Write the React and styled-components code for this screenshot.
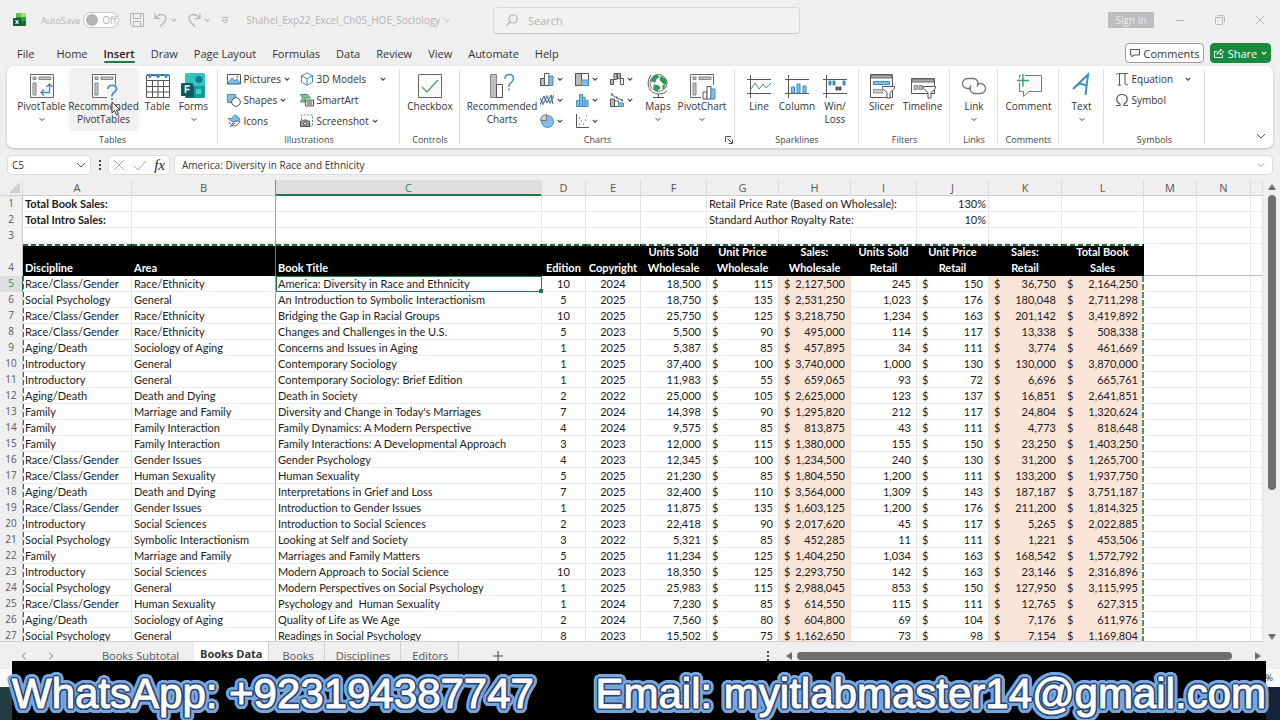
import React from "react";
import styled, { createGlobalStyle, css } from "styled-components";

const GREEN = "#1f7a45";
const UI = `"Open Sans", "Noto Sans", sans-serif`;
const CELL = `Lato, "Open Sans", sans-serif`;

const Global = createGlobalStyle`
  * { box-sizing: border-box; }
  body { margin: 0; background: #efefef; font-family: ${UI}; font-size: 10px; color: #333; }
  button, input { font: inherit; color: inherit; border: 0; background: none; padding: 0; margin: 0; }
  button { cursor: pointer; }
  svg { display: block; flex: none; }
`;

const Window = styled.div`
  position: relative;
  display: flex;
  flex-direction: column;
  height: 100vh;
  overflow: hidden;
  background: #efefef;
`;

/* ---------- title bar ---------- */
const TitleBar = styled.header`
  display: flex;
  align-items: center;
  height: 40px;
  padding: 0 8px 0 13px;
  color: #b4b4b4;
  flex: none;
`;
const TitleSide = styled.div`
  display: flex;
  align-items: center;
  flex: 1 1 0;
  min-width: 0;
  gap: ${(p) => p.$gap || 0}px;
  justify-content: ${(p) => (p.$end ? "flex-end" : "flex-start")};
`;
const AutoSave = styled.label`
  display: flex;
  align-items: center;
  gap: 3px;
  margin-left: 14px;
  font-size: 9px;
`;
const SwitchBox = styled.span`
  display: grid;
  align-items: center;
  width: 36px;
  > * { grid-area: 1 / 1; }
  > span { padding-left: 19px; font-size: 10px; line-height: 16px; }
`;
const Switch = styled.input`
  appearance: none;
  height: 16px;
  width: 36px;
  border: 1px solid #c4c4c4;
  border-radius: 8px;
  background: #fff;
  display: flex;
  align-items: center;
  padding-left: 2px;
  &::before { content: ""; width: 12px; height: 12px; border-radius: 50%; background: #b5b5b5; }
`;
const QuickTools = styled.div`
  display: flex;
  align-items: center;
  gap: 10px;
  margin-left: 11px;
`;
const Plain = styled.button`
  display: flex;
  align-items: center;
  gap: ${(p) => p.$gap || 0}px;
`;
const FileName = styled(Plain)`
  margin-left: 16px;
  white-space: nowrap;
  gap: 3px;
`;
const SearchBox = styled.label`
  display: flex;
  align-items: center;
  flex: 0 1 307px;
  height: 27px;
  margin-left: 8px;
  padding-left: 12px;
  gap: 10px;
  border: 1px solid #d8d8d8;
  border-bottom-color: #c8c8c8;
  border-radius: 4px;
  background: #f1f1f1;
  input { flex: 1; min-width: 0; font-size: 11px; outline: 0; }
  input::placeholder { color: #b3b3b3; opacity: 1; }
`;
const SignIn = styled.button`
  height: 16px;
  width: 46px;
  margin-right: -2px;
  background: #bdbdbd;
  color: #ececec;
`;
const WinButton = styled(Plain)`
  justify-content: center;
  width: 24px;
`;

/* ---------- ribbon tabs ---------- */
const TabRow = styled.nav`
  display: flex;
  align-items: center;
  height: 26px;
  padding: 0 9px 0 17px;
  flex: none;
`;
const Tab = styled.button`
  position: relative;
  height: 26px;
  margin-right: 16px;
  font-size: 11px;
  color: #333;
  white-space: nowrap;
  &:first-child { margin-right: 22px; }
  ${(p) =>
    p.$active &&
    css`
      font-weight: 600;
      color: #222;
      &::after { content: ""; position: absolute; left: 0; right: 0; bottom: 3px; height: 2px; background: ${GREEN}; border-radius: 1px; }
    `}
`;
const TabActions = styled.div`
  display: flex;
  gap: 6px;
  margin-left: auto;
`;
const PillButton = styled.button`
  display: flex;
  align-items: center;
  justify-content: center;
  gap: 4px;
  height: 20px;
  width: ${(p) => (p.$primary ? 61 : 79)}px;
  font-size: 11px;
  border-radius: 4px;
  border: 1px solid ${(p) => (p.$primary ? "#178a3e" : "#9b9b9b")};
  background: ${(p) => (p.$primary ? "#178a3e" : "#fff")};
  color: ${(p) => (p.$primary ? "#fff" : "#333")};
`;

/* ---------- ribbon ---------- */
const Ribbon = styled.section`
  position: relative;
  display: flex;
  height: 82px;
  margin: 0 7px 7px;
  border-radius: 7px;
  background: #fff;
  box-shadow: 0 1px 3px rgba(0, 0, 0, 0.22);
  flex: none;
`;
const Group = styled.div`
  position: relative;
  display: flex;
  flex-direction: column;
  width: ${(p) => p.$w}px;
  padding-top: 2px;
  &::after { content: ""; position: absolute; right: 0; top: 3px; bottom: 4px; width: 1px; background: #dedede; }
`;
const GroupBody = styled.div`
  display: flex;
  flex: 1;
  justify-content: center;
  gap: ${(p) => p.$gap || 0}px;
  padding-right: ${(p) => p.$end || 0}px;
`;
const GroupLabel = styled.div`
  height: 16px;
  line-height: 16px;
  font-size: 9px;
  text-align: center;
  color: #444;
`;
const Launcher = styled(Plain)`
  position: absolute;
  right: 2px;
  bottom: 4px;
`;
const Big = styled.button`
  display: flex;
  flex-direction: column;
  align-items: center;
  width: ${(p) => p.$w}px;
  height: 63px;
  padding-top: 4px;
  line-height: 13px;
  white-space: nowrap;
  border-radius: 3px;
  background: ${(p) => (p.$hover ? "#f1f1f1" : "none")};
`;
const SmallCols = styled.div`
  display: grid;
  grid-auto-flow: column;
  grid-template-rows: repeat(3, 21px);
  grid-template-columns: ${(p) => p.$cols};
`;
const Small = styled.button`
  display: flex;
  align-items: center;
  gap: 3px;
  white-space: nowrap;
  > :nth-child(3) { margin-left: ${(p) => (p.$far ? "auto" : "0")}; }
`;
const Collapse = styled(Plain)`
  margin: auto 7px 7px auto;
`;
const Cursor = styled.svg`
  position: absolute;
  left: 104px;
  top: 35px;
`;

/* ---------- formula bar ---------- */
const FormulaRow = styled.div`
  display: flex;
  align-items: center;
  gap: 4px;
  height: 25px;
  padding: 0 7px 5px;
  flex: none;
`;
const Box = styled.div`
  display: flex;
  align-items: center;
  justify-content: space-between;
  height: 20px;
  padding: 0 ${(p) => p.$pad || 4}px;
  width: ${(p) => (p.$w ? p.$w + "px" : "auto")};
  flex: ${(p) => (p.$w ? "none" : 1)};
  border: 1px solid #dcdcdc;
  border-radius: 4px;
  background: #fff;
  input { flex: 1; min-width: 0; outline: 0; }
`;
const DotsGap = styled.div`
  display: flex;
  justify-content: center;
  width: 9px;
`;
const Fx = styled.span`
  font: italic 15px/16px "Liberation Serif", serif;
  color: #222;
`;

/* ---------- grid ---------- */
const SheetArea = styled.main`
  display: flex;
  flex: 1 1 0;
  min-height: 0;
`;
const GridClip = styled.div`
  flex: 1;
  min-width: 0;
  overflow: hidden;
  border-bottom: 1px solid #d0d0d0;
`;
const Sheet = styled.table`
  width: 100%;
  table-layout: fixed;
  border-spacing: 0;
  border-collapse: separate;
  font-family: ${CELL};
  font-size: 11px;
  line-height: 15px;
  color: #1c1c1c;
`;
const ColHead = styled.th`
  height: 16px;
  padding: 0;
  font: 400 11px/15px ${UI};
  color: ${(p) => (p.$sel ? "#3f7f5a" : "#555")};
  background: ${(p) => (p.$sel ? "#dedede" : "#efefef")};
  border-right: 1px solid ${(p) => (p.$freeze ? "#8a8a8a" : "#dcdcdc")};
  border-bottom: 1px solid ${(p) => (p.$sel ? GREEN : "#cfcfcf")};
  box-shadow: ${(p) => (p.$sel ? `inset 0 -1px 0 ${GREEN}` : "none")};
`;
const RowHead = styled.th`
  padding: 0;
  font: 400 10px/15px ${UI};
  vertical-align: bottom;
  color: ${(p) => (p.$sel ? "#3f8a60" : "#5a5a5a")};
  background: ${(p) => (p.$sel ? "#dedede" : "#efefef")};
  border-right: 1px solid ${(p) => (p.$sel ? GREEN : "#c8c8c8")};
  border-bottom: 1px solid ${(p) => (p.$sel ? "#dedede" : "#efefef")};
`;
const antsX = `repeating-linear-gradient(90deg, #2e6b45 0 5px, #e6efe9 5px 8px) top / 100% 2px no-repeat`;
const Cell = styled.td`
  height: 16px;
  padding: 0 ${(p) => (p.$num ? 5 : 2)}px;
  white-space: pre;
  font-weight: ${(p) => (p.$bold ? 700 : 400)};
  text-align: ${(p) => p.$align || "left"};
  background: ${(p) => (p.$tint ? "#f9e4d8" : "#fff")};
  border-right: 1px solid ${(p) => (p.$freeze ? "#9c9c9c" : p.$tint ? "#f5e0d4" : "#e3e3e3")};
  border-bottom: 1px solid ${(p) => (p.$pane ? "#bdbdbd" : p.$tint ? "#f9e4d8" : "#ececec")};
  ${(p) =>
    p.$antL &&
    css`background: repeating-linear-gradient(#555 0 5px, #fff 5px 8px) left / 1px 100% no-repeat #fff;`}
  ${(p) =>
    p.$antR &&
    css`background: repeating-linear-gradient(#4d9466 0 6px, #fff 6px 8px) right / 2px 100% no-repeat #f9e4d8; border-right: 0; padding-right: 6px;`}
  ${(p) =>
    p.$active &&
    css`
      position: relative;
      box-shadow: inset 1px 1px 0 ${GREEN};
      border-color: ${GREEN};
      &::after { content: ""; position: absolute; right: -2px; bottom: -2px; width: 4px; height: 4px; background: ${GREEN}; }
    `}
`;
const HeadCell = styled.th`
  height: 32px;
  padding: 0 2px;
  line-height: 16px;
  vertical-align: bottom;
  white-space: pre;
  color: #fff;
  text-align: ${(p) => p.$align || "left"};
  background: ${antsX} #000;
  border-right: 1px solid ${(p) => (p.$freeze ? "#777" : "#000")};
`;
const Money = styled.span`
  display: flex;
  justify-content: space-between;
`;

const VScroll = styled.div`
  display: flex;
  flex-direction: column;
  align-items: center;
  width: 17px;
  padding: 4px 0 2px;
`;
const VTrack = styled.div`
  flex: 1;
  width: 8px;
  margin: 3px 0;
  &::before { content: ""; display: block; height: 68%; border-radius: 4px; background: #6e6e6e; }
`;

/* ---------- sheet tabs and status ---------- */
const SheetBar = styled.footer`
  display: flex;
  align-items: center;
  height: 27px;
  padding: 0 17px 0 20px;
  flex: none;
  color: #555;
`;
const SheetNav = styled.div`
  display: flex;
  gap: 19px;
  width: 71px;
`;
const SheetTab = styled.button`
  height: 27px;
  padding: 0 10px 0 11px;
  font-size: 11px;
  white-space: nowrap;
  border-right: 1px solid ${(p) => (p.$bare ? "transparent" : "#cfcfcf")};
  ${(p) =>
    p.$active &&
    css`
      margin: 0 2px 0 4px;
      padding: 0 6px 4px;
      font-weight: 700;
      color: #333;
      background: #fff;
      border-radius: 0 0 4px 4px;
    `}
`;
const HScroll = styled.div`
  display: flex;
  align-items: center;
  gap: 5px;
  margin-left: auto;
  width: 40%;
  > :first-child { margin-right: 9px; }
`;
const HTrack = styled.div`
  flex: 1;
  &::before { content: ""; display: block; width: 96%; height: 8px; border-radius: 4px; background: #6e6e6e; }
`;
const StatusBar = styled.div`
  height: 18px;
  padding-right: 7px;
  text-align: right;
  font-size: 9px;
  line-height: 18px;
  background: #f8f8f8;
  flex: none;
`;
const Taskbar = styled.div`
  height: 33px;
  background: linear-gradient(90deg, #223d40, #17233d);
  flex: none;
`;

const ring = (r, n, color) =>
  Array.from({ length: n }, (_, i) => {
    const a = (i / n) * Math.PI * 2;
    return `${(Math.cos(a) * r).toFixed(2)}px ${(Math.sin(a) * r).toFixed(2)}px 0 ${color}`;
  }).join(",");
const Banner = styled.div`
  position: absolute;
  left: 12px;
  right: 14px;
  bottom: 0;
  height: 59px;
  display: flex;
  align-items: center;
  justify-content: space-between;
  padding-top: 7px;
  background: #000;
  color: #fff;
  font: 42px/48px "Liberation Sans", sans-serif;
  white-space: nowrap;
  -webkit-text-stroke: 1px #fff;
  text-shadow: ${ring(1, 8, "#2c4674")}, ${ring(2, 16, "#2c4674")}, ${ring(4, 24, "#74a6df")}, ${ring(5, 28, "#74a6df")};
`;

/* ---------- icons ---------- */
const Ico = ({ w = 16, h, box, children, ...r }) => (
  <svg width={w} height={h || w} viewBox={box || `0 0 ${w} ${h || w}`} fill="none" stroke="#555" aria-hidden="true" {...r}>
    {children}
  </svg>
);
const Chev = ({ s = 6, c = "#444" }) => (
  <Ico w={s} h={s} box="0 0 8 8" stroke={c} strokeWidth="1.5"><path d="M1 2.5l3 3 3-3" /></Ico>
);
const BigChev = ({ c = "#555", s = 10 }) => (
  <Ico w={s} box="0 0 10 10" stroke={c}><path d="M1 3l4 4 4-4" /></Ico>
);
const B = "#3b8fc4";
const BF = "#83bde6";
const pivotBase = (
  <>
    <path d="M2.5 2.500h23v23h-23z" fill="#fafafa" stroke="#666" />
    <path d="M5 5h3v2.500H5zM11 5h12v2.500H11zM5 11h3v12H5z" fill="#c4c4c4" stroke="#888" />
  </>
);
const PivotTableIcon = () => (
  <Ico w={28}>{pivotBase}<path d="M13 20.500h8.500V12M16 17.500l-3 3 3 3M18.500 15l3-3 3 3" stroke={B} strokeWidth="1.300" /></Ico>
);
const RecPivotIcon = () => (
  <Ico w={28}>{pivotBase}<path d="M17 13h11v15H17z" fill="#f1f1f1" stroke="none" /><path d="M18 17c0-5 8.500-5 8.500 0 0 3-4.500 3.500-4.500 6.500v1M22 26v2" stroke={B} strokeWidth="1.600" /></Ico>
);
const TableIcon = () => (
  <Ico w={28}>
    <path d="M2.500 3.500h23v22h-23zM2.500 8.500h23M2.500 14.500h23M2.500 20h23M8.500 8.500v17M14 8.500v17M19.500 8.500v17" fill="#fff" />
    <path d="M3 2.500h22M4 3l2 3 2-3zM11.500 3l2.500 3 2.500-3zM20 3l2 3 2-3z" fill={B} stroke={B} />
  </Ico>
);
const FormsIcon = () => (
  <Ico w={28} stroke="none">
    <rect x="5" y="1" width="20" height="25" rx="2" fill="#2fc4c0" />
    <path d="M14 14h11v10a2 2 0 0 1-2 2h-9z" fill="#0f9c9c" />
    <path d="M5 14h9v12H7a2 2 0 0 1-2-2z" fill="#0b6468" />
    <circle cx="19" cy="7.500" r="3.500" fill="#117d86" />
    <path d="M16 17h5v5h-5z" fill="#45cfc9" />
    <rect x="1" y="11" width="12" height="13" rx="1" fill="#0a5b60" />
    <path d="M5.500 21v-7h4.500M5.500 17.500h4" stroke="#fff" strokeWidth="1.600" />
  </Ico>
);
const CheckboxIcon = () => (
  <Ico w={28}><path d="M2.500 2.500h23v23h-23z" fill="#fafafa" stroke="#666" /><path d="M6 15l5 5L22 8" stroke="#4aa86a" strokeWidth="1.400" /></Ico>
);
const RecChartsIcon = () => (
  <Ico w={28}><path d="M2.500 2.500h6v23h-6z" fill="#bdbdbd" stroke="#888" /><path d="M8.500 12.500h6v13h-6z" /><path d="M17 7c0-6 8.500-6 8.500 0 0 3-4.500 3.500-4.500 7v1M21 16.500v2" stroke={B} strokeWidth="1.500" /></Ico>
);
const MapsIcon = () => (
  <Ico w={28}>
    <circle cx="14.500" cy="11" r="8.500" fill="#fafafa" stroke="#777" />
    <path d="M9 5c3-3 5-2 6 0l-3 2-1 3-4-1zM17 4l5 4v5l-3-2-3-3zM10 13l5 1 1 2-3 3-3-2zM19 13l2 1-2 3z" fill="#2f9a57" stroke="#2f9a57" />
    <path d="M7 3C1 11 5 22 15 22c4 0 6-1 8-3M14.500 22v3M9 25.500h11" stroke="#555" />
  </Ico>
);
const PivotChartIcon = () => (
  <Ico w={28}>{pivotBase}<path d="M13 13h15v15H13z" fill="#fff" stroke="none" /><path d="M15 20h4v7h-4z" fill="#fff" /><path d="M19 14.500h4V27h-4z" fill="#fff" /><path d="M23 17h4v10h-4z" fill={BF} stroke={B} /></Ico>
);
const sparkBase = <path d="M5.500 3v23M2 7.500h24M2 21.500h24" stroke="#555" />;
const LineIcon = () => <Ico w={28}>{sparkBase}<path d="M6 17l4-6 4 6 4-5 3 4 5-5" stroke={B} /></Ico>;
const ColumnIcon = () => <Ico w={28}>{sparkBase}<path d="M8.500 15h3v6h-3zM14 12h3v9h-3zM20 14h3v7h-3z" fill={BF} stroke={B} /></Ico>;
const WinLossIcon = () => (
  <Ico w={28}>{sparkBase}<path d="M8 9h2v4H8zM12 9h2v4h-2zM22 9h2v4h-2z" fill={B} stroke={B} /><path d="M15 15h2v3h-2zM18 15h2v3h-2z" fill="#444" /></Ico>
);
const funnel = <path d="M14.500 14.500h12v2l-4.500 4V26h-3v-5.500l-4.500-4z" fill="#fff" stroke="#555" />;
const SlicerIcon = () => (
  <Ico w={28}><path d="M2.500 2.500h22v23h-22z" fill="#fff" /><path d="M3 3h21v3H3z" fill="#aaa" stroke="#666" /><path d="M5.500 9.500h16v3h-16z" fill={BF} stroke={B} /><path d="M5.500 17.500h9v3.500h-9z" fill="#ccc" stroke="#999" />{funnel}</Ico>
);
const TimelineIcon = () => (
  <Ico w={28}><path d="M2.500 6.500h23v15h-23z" fill="#fff" /><path d="M3 7h22v3H3z" fill="#aaa" stroke="#666" /><path d="M5 13.500h3.500v4H5zM10 13.500h3.500v4H10z" fill="#bbb" stroke="#888" />{funnel}</Ico>
);
const LinkIcon = () => (
  <Ico w={28} stroke="#777" strokeWidth="1.300">
    <path d="M11 16.500H7.500a5 5 0 0 1 0-10H13a5 5 0 0 1 4 8" />
    <path d="M17 11.500h3.500a5 5 0 0 1 0 10H15a5 5 0 0 1-4-8" />
  </Ico>
);
const CommentIcon = () => (
  <Ico w={28}><path d="M4.500 3.500h22v16H14l-5.500 5v-5h-4z" fill="#fafafa" stroke="#777" /><path d="M2 8.500h12M8 2v13" stroke="#fff" strokeWidth="4" /><path d="M2 8.500h12M8 2v13" stroke="#35a35c" strokeWidth="1.400" /></Ico>
);
const TextIcon = () => (
  <Ico w={28}><path d="M5 17l15-14.500L17.500 23M10 12.500c3-1 6-.5 9 2" stroke={B} strokeWidth="2" /></Ico>
);

const S = (p) => <Ico w={14} {...p} />;
const PicturesIcon = () => <S><path d="M.5 2.500h13v9.500H.5z" fill="#fff" /><path d="M1 11l4-5 3 3 2-2 3 4.500H1z" fill={BF} stroke={B} /><circle cx="10.500" cy="4.800" r=".7" fill="#d9852b" stroke="#d9852b" /></S>;
const ShapesIcon = () => <S><path d="M.5 1.500h8v8h-8z" fill={BF} stroke={B} /><circle cx="9" cy="9" r="4.300" fill="#fff" /></S>;
const IconsIcon = () => <S><path d="M1 4c2 1 4 1 5-1 1-3 5-2 5 1l2 1-2 1c-1 3-7 3-10-2z" fill={BF} stroke={B} /><path d="M2 8c2 5 8 6 11-1-4 0-6 0-8 3M3 13l5-4" fill="#fff" /></S>;
const CubeIcon = () => <S><path d="M7 .8l5.500 3v6.400L7 13.200l-5.500-3V3.800zM1.500 3.800L7 6.800l5.500-3M7 6.800v6.400" stroke={B} /></S>;
const SmartArtIcon = () => <S><path d="M.5 1.500h7l3 3.500H5v4H.5l2-4z" fill="#7cc596" stroke="#3d9a5f" /><path d="M5.500 7h8v6h-8z" fill="#e5e5e5" /><path d="M7 9h5M7 11h5" /></S>;
const ShotIcon = () => <S><path d="M1.500 6V1h11v11H10" strokeDasharray="2 1.500" stroke="#3d9a5f" /><path d="M.5 7h2l1-1h3l1 1h2v5.500h-9z" fill="#999" /><circle cx="5" cy="9.600" r="1.500" fill="#fff" /></S>;
const chartIcons = [
  <S><path d="M.5 6.500h4v7h-4z" fill="#bbb" /><path d="M4.500 1.500h4.500v12H4.500z" fill="#fff" /><path d="M9 4h4v9.500H9z" fill={BF} stroke={B} /></S>,
  <S><path d="M0 5l3 6 4-8 3 7 4-8" stroke={B} strokeWidth="1.300" /><path d="M0 12l4-9 3 7 4-8 2 9" stroke="#555" /></S>,
  <S><circle cx="7.500" cy="7.500" r="6" fill={BF} stroke={B} /><path d="M6.500 6.500V.5a6 6 0 0 0-6 6z" fill="#ccc" stroke="#777" /></S>,
  <S><path d="M.5 1.500h13v12H.5z" fill="#fff" /><path d="M.5 1.500h6v12h-6z" fill="#bbb" /><path d="M6.500 8h7v5.500h-7z" fill={BF} stroke={B} /></S>,
  <S><path d="M1.500 13.500v-6h3v-6h3v3h2.500v3h3v6z" fill={BF} stroke={B} /><path d="M4.500 7v6M7.500 4v9M10 8v5" stroke={B} /></S>,
  <S><path d="M1.500 0v13.500H14" /><path d="M4 10h1M6 7h1M8 10h1M10 6h1M4 4h1M11 2h1" /></S>,
  <S><path d="M.5 7.500h3v5h-3zM4 1.500h3v6H4zM7.500 1.500h3v5h-3z" fill="#bbb" /><path d="M10.500 6.500h3v6h-3z" fill="#fff" /></S>,
  <S><path d="M.5 6h4v7.500h-4z" fill="#bbb" /><path d="M4.500 8h4v5.500h-4z" fill="#fff" /><path d="M8.500 10h5v3.500h-5z" fill={BF} stroke={B} /><path d="M1 1l5 3.500 7 3" /><path d="M1 1.500h1.500M6 4.500h1.500M11.500 7.500H13" strokeWidth="2" /></S>,
];
const PiIcon = () => <S stroke="#555"><path d="M1 3c1-1.500 2-1.500 3-1.500h9M4.500 2v11M2.500 13h3.500M10 2v9c0 2 1 2 3 1.500" /></S>;
const OmegaIcon = () => <S stroke="#555" strokeWidth="1.200"><path d="M1 12.500h4v-1.500C0 8 1 1.500 7 1.500S14 8 9 11v1.500h4" /></S>;

const ExcelLogo = () => (
  <Ico w={14} stroke="none">
    <rect x="3" y="0" width="10" height="13" rx="1.500" fill="#2f9a4f" />
    <path d="M3 1.500A1.500 1.500 0 0 1 4.500 0H8v4H3z" fill="#5fc04f" /><path d="M8 0h3.500A1.500 1.500 0 0 1 13 1.500V4H8z" fill="#a5e06a" />
    <path d="M8 8h5v3.500a1.500 1.500 0 0 1-1.500 1.500H8z" fill="#17703a" />
    <rect x="0" y="5" width="8" height="8" rx="1" fill="#0f5b2c" />
    <path d="M2.500 7l3 4M5.500 7l-3 4" stroke="#fff" strokeWidth="1.200" />
  </Ico>
);
const G = "#b4b4b4";
const SaveIcon = () => <Ico w={14} stroke={G}><path d="M.5.5h13v13H2.500l-2-2zM3.500.5v5h7v-5M3.500 13.500v-5h7v5" /></Ico>;
const UndoIcon = () => <Ico w={14} stroke={G} strokeWidth="1.200"><path d="M1 .5v5h5M1.500 5C5 0 12 1 12 5.500c0 3-3 5-6 8" /></Ico>;
const RedoIcon = () => <Ico w={14} stroke={G} strokeWidth="1.200"><path d="M13 .5v5H8M12.500 5C9 0 2 1 2 5.500c0 3 3 5 6 8" /></Ico>;
const Dots = () => <Ico w={4} h={12} stroke="none" fill="#444"><path d="M1 1h2v2H1zM1 5h2v2H1zM1 9h2v2H1z" /></Ico>;
const Tri = ({ d }) => <Ico w={8} stroke="none" fill="#6e6e6e"><path d={d} /></Ico>;

/* ---------- data ---------- */
const cols = [23, 109, 144, 266, 44, 55, 66, 72, 72, 66, 72, 73, 82, 53, 54];
const letters = "ABCDEFGHIJKLMN".split("");
const headers = ["Discipline", "Area", "Book Title", "Edition", "Copyright", "Units Sold\nWholesale", "Unit Price\nWholesale", "Sales:\nWholesale", "Units Sold\nRetail", "Unit Price\nRetail", "Sales:\nRetail", "Total Book\nSales"];
const rows = `Race/Class/Gender|Race/Ethnicity|America: Diversity in Race and Ethnicity|10|2024|18,500|115|2,127,500|245|150|36,750|2,164,250
Social Psychology|General|An Introduction to Symbolic Interactionism|5|2025|18,750|135|2,531,250|1,023|176|180,048|2,711,298
Race/Class/Gender|Race/Ethnicity|Bridging the Gap in Racial Groups|10|2025|25,750|125|3,218,750|1,234|163|201,142|3,419,892
Race/Class/Gender|Race/Ethnicity|Changes and Challenges in the U.S.|5|2023|5,500|90|495,000|114|117|13,338|508,338
Aging/Death|Sociology of Aging|Concerns and Issues in Aging|1|2025|5,387|85|457,895|34|111|3,774|461,669
Introductory|General|Contemporary Sociology|1|2025|37,400|100|3,740,000|1,000|130|130,000|3,870,000
Introductory|General|Contemporary Sociology: Brief Edition|1|2025|11,983|55|659,065|93|72|6,696|665,761
Aging/Death|Death and Dying|Death in Society|2|2022|25,000|105|2,625,000|123|137|16,851|2,641,851
Family|Marriage and Family|Diversity and Change in Today's Marriages|7|2024|14,398|90|1,295,820|212|117|24,804|1,320,624
Family|Family Interaction|Family Dynamics: A Modern Perspective|4|2024|9,575|85|813,875|43|111|4,773|818,648
Family|Family Interaction|Family Interactions: A Developmental Approach|3|2023|12,000|115|1,380,000|155|150|23,250|1,403,250
Race/Class/Gender|Gender Issues|Gender Psychology|4|2023|12,345|100|1,234,500|240|130|31,200|1,265,700
Race/Class/Gender|Human Sexuality|Human Sexuality|5|2025|21,230|85|1,804,550|1,200|111|133,200|1,937,750
Aging/Death|Death and Dying|Interpretations in Grief and Loss|7|2025|32,400|110|3,564,000|1,309|143|187,187|3,751,187
Race/Class/Gender|Gender Issues|Introduction to Gender Issues|1|2025|11,875|135|1,603,125|1,200|176|211,200|1,814,325
Introductory|Social Sciences|Introduction to Social Sciences|2|2023|22,418|90|2,017,620|45|117|5,265|2,022,885
Social Psychology|Symbolic Interactionism|Looking at Self and Society|3|2022|5,321|85|452,285|11|111|1,221|453,506
Family|Marriage and Family|Marriages and Family Matters|5|2025|11,234|125|1,404,250|1,034|163|168,542|1,572,792
Introductory|Social Sciences|Modern Approach to Social Science|10|2023|18,350|125|2,293,750|142|163|23,146|2,316,896
Social Psychology|General|Modern Perspectives on Social Psychology|1|2025|25,983|115|2,988,045|853|150|127,950|3,115,995
Race/Class/Gender|Human Sexuality|Psychology and  Human Sexuality|1|2024|7,230|85|614,550|115|111|12,765|627,315
Aging/Death|Sociology of Aging|Quality of Life as We Age|2|2024|7,560|80|604,800|69|104|7,176|611,976
Social Psychology|General|Readings in Social Psychology|8|2023|15,502|75|1,162,650|73|98|7,154|1,169,804`
  .split("\n")
  .map((r) => r.split("|"));
const moneyCols = [6, 7, 9, 10, 11];
const tintCols = [7, 10, 11];

const Blank = ({ from, to, pane }) =>
  Array.from({ length: to - from }, (_, i) => <Cell key={i} $freeze={from + i === 1} $pane={pane} />);

function DataRow({ r, n }) {
  const sel = n === 5;
  return (
    <tr>
      <RowHead scope="row" $sel={sel}>{n}</RowHead>
      {r.map((v, i) => (
        <Cell
          key={i}
          $freeze={i === 1}
          $antL={i === 0}
          $antR={i === 11}
          $tint={tintCols.includes(i)}
          $num={i > 4}
          $active={sel && i === 2}
          $align={i > 4 ? "right" : i > 2 ? "center" : "left"}
        >
          {moneyCols.includes(i) ? <Money><span>$</span><span>{v}</span></Money> : v}
        </Cell>
      ))}
      <Blank from={12} to={15} />
    </tr>
  );
}

function LargeButton({ icon, lines, w, chev, hover }) {
  return (
    <Big $w={w} $hover={hover}>
      {icon}
      {lines.map((l) => <span key={l}>{l}</span>)}
      {chev && <Ico w={6} h={13} box="0 0 6 13" stroke="#444"><path d="M.5 5L3 7.500 5.500 5" /></Ico>}
    </Big>
  );
}
const SmallButton = ({ icon, text, chev, far }) => (
  <Small $far={far} aria-label={text || "Chart type"}>
    {icon}
    {text && <span>{text}</span>}
    {chev && <Chev />}
  </Small>
);

export default function App() {
  return (
    <Window>
      <Global />
      <TitleBar>
        <TitleSide>
          <ExcelLogo />
          <AutoSave>
            AutoSave
            <SwitchBox><Switch type="checkbox" /><span>Off</span></SwitchBox>
          </AutoSave>
          <QuickTools>
            <Plain aria-label="Save"><SaveIcon /></Plain>
            <Plain aria-label="Undo" $gap={3}><UndoIcon /><Chev c={G} /></Plain>
            <Plain aria-label="Redo" $gap={3}><RedoIcon /><Chev c={G} /></Plain>
            <Plain aria-label="Customize toolbar"><Ico w={10} stroke={G}><path d="M2 2.500h6M2 5l3 3 3-3z" /></Ico></Plain>
          </QuickTools>
          <FileName>Shahel_Exp22_Excel_Ch05_HOE_Sociology<BigChev c={G} s={8} /></FileName>
        </TitleSide>
        <SearchBox>
          <Ico w={12} stroke={G} strokeWidth="1.200"><circle cx="7" cy="5" r="4" /><path d="M4 8l-3.500 3.500" /></Ico>
          <input type="search" placeholder="Search" aria-label="Search" />
        </SearchBox>
        <TitleSide $end $gap={16}>
          <SignIn>Sign in</SignIn>
          <WinButton aria-label="Minimize"><Ico w={10} stroke={G}><path d="M1 5.500h8" /></Ico></WinButton>
          <WinButton aria-label="Restore"><Ico w={10} stroke={G}><rect x=".5" y="2.500" width="7" height="7" rx="1" /><path d="M3 .5h4.500a2 2 0 0 1 2 2V7" /></Ico></WinButton>
          <WinButton aria-label="Close"><Ico w={10} stroke={G}><path d="M1 1l8 8M9 1L1 9" /></Ico></WinButton>
        </TitleSide>
      </TitleBar>

      <TabRow>
        {["File", "Home", "Insert", "Draw", "Page Layout", "Formulas", "Data", "Review", "View", "Automate", "Help"].map((t) => (
          <Tab key={t} $active={t === "Insert"}>{t}</Tab>
        ))}
        <TabActions>
          <PillButton><Ico w={10} box="0 0 10 10"><path d="M.5 1.500h9v5.500H4L2 9V7H.5z" /></Ico>Comments</PillButton>
          <PillButton $primary><Ico w={10} stroke="#fff"><path d="M3 3.500H.5v6h8V7M3 6.500C3.500 4 4.500 3 6.500 3V1l3 3-3 3V5C5 5 4 5.200 3 6.500z" /></Ico>Share<Chev c="#fff" /></PillButton>
        </TabActions>
      </TabRow>

      <Ribbon>
        <Group $w={211}>
          <GroupBody>
            <LargeButton icon={<PivotTableIcon />} lines={["PivotTable"]} w={54} chev />
            <LargeButton icon={<RecPivotIcon />} lines={["Recommended", "PivotTables"]} w={70} hover />
            <LargeButton icon={<TableIcon />} lines={["Table"]} w={38} />
            <LargeButton icon={<FormsIcon />} lines={["Forms"]} w={34} chev />
          </GroupBody>
          <GroupLabel>Tables</GroupLabel>
        </Group>
        <Group $w={182}>
          <GroupBody $end={6}>
            <SmallCols $cols="73px 86px">
              <SmallButton icon={<PicturesIcon />} text="Pictures" chev />
              <SmallButton icon={<ShapesIcon />} text="Shapes" chev />
              <SmallButton icon={<IconsIcon />} text="Icons" />
              <SmallButton icon={<CubeIcon />} text="3D Models" chev far />
              <SmallButton icon={<SmartArtIcon />} text="SmartArt" />
              <SmallButton icon={<ShotIcon />} text="Screenshot" chev />
            </SmallCols>
          </GroupBody>
          <GroupLabel>Illustrations</GroupLabel>
        </Group>
        <Group $w={60}>
          <GroupBody><LargeButton icon={<CheckboxIcon />} lines={["Checkbox"]} w={50} /></GroupBody>
          <GroupLabel>Controls</GroupLabel>
        </Group>
        <Group $w={275}>
          <GroupBody $gap={2}>
            <LargeButton icon={<RecChartsIcon />} lines={["Recommended", "Charts"]} w={72} />
            <SmallCols $cols="35px 35px 31px">
              {chartIcons.map((ic, i) => <SmallButton key={i} icon={ic} chev />)}
            </SmallCols>
            <LargeButton icon={<MapsIcon />} lines={["Maps"]} w={30} chev />
            <LargeButton icon={<PivotChartIcon />} lines={["PivotChart"]} w={54} chev />
          </GroupBody>
          <GroupLabel>Charts</GroupLabel>
          <Launcher aria-label="Chart options"><Ico w={8}><path d="M.5 6V.5H6M2.500 2.500l5 5M7.500 3.500v4h-4" /></Ico></Launcher>
        </Group>
        <Group $w={124}>
          <GroupBody>
            <LargeButton icon={<LineIcon />} lines={["Line"]} w={38} />
            <LargeButton icon={<ColumnIcon />} lines={["Column"]} w={38} />
            <LargeButton icon={<WinLossIcon />} lines={["Win/", "Loss"]} w={38} />
          </GroupBody>
          <GroupLabel>Sparklines</GroupLabel>
        </Group>
        <Group $w={91}>
          <GroupBody $end={2}>
            <LargeButton icon={<SlicerIcon />} lines={["Slicer"]} w={38} />
            <LargeButton icon={<TimelineIcon />} lines={["Timeline"]} w={44} />
          </GroupBody>
          <GroupLabel>Filters</GroupLabel>
        </Group>
        <Group $w={48}>
          <GroupBody><LargeButton icon={<LinkIcon />} lines={["Link"]} w={40} chev /></GroupBody>
          <GroupLabel>Links</GroupLabel>
        </Group>
        <Group $w={61}>
          <GroupBody><LargeButton icon={<CommentIcon />} lines={["Comment"]} w={54} /></GroupBody>
          <GroupLabel>Comments</GroupLabel>
        </Group>
        <Group $w={45}>
          <GroupBody><LargeButton icon={<TextIcon />} lines={["Text"]} w={40} chev /></GroupBody>
        </Group>
        <Group $w={101}>
          <GroupBody $end={4}>
            <SmallCols $cols="76px">
              <SmallButton icon={<PiIcon />} text="Equation" chev far />
              <SmallButton icon={<OmegaIcon />} text="Symbol" />
            </SmallCols>
          </GroupBody>
          <GroupLabel>Symbols</GroupLabel>
        </Group>
        <Collapse aria-label="Collapse ribbon"><BigChev /></Collapse>
        <Cursor width="10" height="15" viewBox="0 0 10 15" fill="#fff" stroke="#333" aria-hidden="true">
          <path d="M1 1v11l2.500-2.500L5.500 14l2-1-2-4H9z" />
        </Cursor>
      </Ribbon>

      <FormulaRow>
        <Box $w={84}><input aria-label="Name box" defaultValue="C5" /><BigChev /></Box>
        <DotsGap><Dots /></DotsGap>
        <Box $w={62}>
          <Plain aria-label="Cancel"><Ico w={12} stroke="#aaa"><path d="M1 1l10 10M11 1L1 11" /></Ico></Plain>
          <Plain aria-label="Enter"><Ico w={14} h={12} stroke="#aaa"><path d="M1 7l4 4 8-9" /></Ico></Plain>
          <Plain aria-label="Insert function"><Fx>fx</Fx></Plain>
        </Box>
        <Box $pad={7}><input aria-label="Formula" defaultValue="America: Diversity in Race and Ethnicity" /><Plain aria-label="Expand formula bar"><BigChev s={8} c="#888" /></Plain></Box>
      </FormulaRow>

      <SheetArea>
        <GridClip>
          <Sheet>
            <colgroup>{cols.map((w, i) => <col key={i} width={w} />)}<col /></colgroup>
            <thead>
              <tr>
                <ColHead><Ico w={20} h={13} stroke="none" fill="#d0d0d0"><path d="M20 1v11H9z" /></Ico></ColHead>
                {letters.map((l) => <ColHead key={l} scope="col" $sel={l === "C"} $freeze={l === "B"}>{l}</ColHead>)}
                <ColHead />
              </tr>
            </thead>
            <tbody>
              <tr>
                <RowHead scope="row">1</RowHead>
                <Cell $bold>Total Book Sales:</Cell><Blank from={1} to={6} />
                <Cell colSpan={3}>Retail Price Rate (Based on Wholesale):</Cell>
                <Cell $align="right">130%</Cell><Blank from={10} to={15} />
              </tr>
              <tr>
                <RowHead scope="row">2</RowHead>
                <Cell $bold>Total Intro Sales:</Cell><Blank from={1} to={6} />
                <Cell colSpan={3}>Standard Author Royalty Rate:</Cell>
                <Cell $align="right">10%</Cell><Blank from={10} to={15} />
              </tr>
              <tr><RowHead scope="row">3</RowHead><Blank from={0} to={15} /></tr>
              <tr>
                <RowHead scope="row">4</RowHead>
                {headers.map((h, i) => (
                  <HeadCell key={h} scope="col" $freeze={i === 1} $align={i > 2 ? "center" : "left"}>{h}</HeadCell>
                ))}
                <Blank from={12} to={15} pane />
              </tr>
              {rows.map((r, i) => <DataRow key={i} r={r} n={i + 5} />)}
            </tbody>
          </Sheet>
        </GridClip>
        <VScroll>
          <Tri d="M0 6h8L4 0z" />
          <VTrack />
          <Tri d="M0 2h8L4 8z" />
        </VScroll>
      </SheetArea>

      <SheetBar>
        <SheetNav>
          <Plain aria-label="Previous sheet"><Ico w={8} stroke="#888"><path d="M6 .5L2 4l4 3.500" /></Ico></Plain>
          <Plain aria-label="Next sheet"><Ico w={8} stroke="#888"><path d="M2 .5L6 4 2 7.500" /></Ico></Plain>
        </SheetNav>
        <SheetTab $bare>Books Subtotal</SheetTab>
        <SheetTab $active>Books Data</SheetTab>
        <SheetTab>Books</SheetTab>
        <SheetTab>Disciplines</SheetTab>
        <SheetTab>Editors</SheetTab>
        <SheetTab $bare aria-label="New sheet"><Ico w={36} h={10} stroke="#444" box="-23 0 36 10"><path d="M5 0v10M0 5h10" /></Ico></SheetTab>
        <HScroll>
          <Dots />
          <Tri d="M8 0v8L2 4z" />
          <HTrack />
          <Tri d="M0 0v8l6-4z" />
        </HScroll>
      </SheetBar>
      <StatusBar>%</StatusBar>
      <Taskbar />
      <Banner><span>WhatsApp: +923194387747</span><span>Email: myitlabmaster14@gmail.com</span></Banner>
    </Window>
  );
}
